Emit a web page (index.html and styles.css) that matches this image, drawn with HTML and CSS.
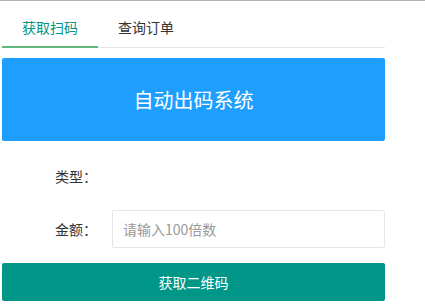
FILE: index.html
```html
<!DOCTYPE html>
<html lang="zh-CN">
<head>
    <meta charset="UTF-8">
    <meta name="viewport" content="width=device-width, initial-scale=1.0">
    <title>自动出码系统</title>
    <link rel="stylesheet" href="styles.css">
</head>
<body>
    <div class="page">
        <ul class="tab-title">
            <li class="tab-item active">获取扫码</li>
            <li class="tab-item">查询订单</li>
        </ul>
        <div class="banner">自动出码系统</div>
        <form class="code-form">
            <div class="form-item">
                <label class="form-label">类型：</label>
                <div class="input-block"></div>
            </div>
            <div class="form-item">
                <label class="form-label">金额：</label>
                <div class="input-block">
                    <input type="text" class="text-input" placeholder="请输入100倍数">
                </div>
            </div>
            <button type="button" class="submit-btn">获取二维码</button>
        </form>
    </div>
</body>
</html>
```

FILE: styles.css
```css
/* Base styles */
body {
    margin: 0;
    font-family: "Noto Sans CJK SC", "Liberation Sans", sans-serif;
    font-size: 14px;
    color: #333;
    background: #fff;
    border-top: 1px solid #b4b4b4;
}

.page {
    width: 383px;
    padding: 6px 0 0 2px;
}

/* Tabs */
.tab-title {
    display: flex;
    margin: 0;
    padding: 0;
    list-style: none;
    border-bottom: 1px solid #e6e6e6;
    height: 40px;
}

.tab-item {
    padding: 0 20px;
    line-height: 40px;
    height: 40px;
    color: #333;
    cursor: pointer;
}

.tab-item.active {
    color: #009688;
    border-bottom: 2px solid #5fb878;
    box-sizing: border-box;
    height: 41px;
}

/* Banner */
.banner {
    margin-top: 10px;
    height: 83px;
    background: #1e9fff;
    border-radius: 2px;
    color: #fff;
    font-size: 20px;
    display: flex;
    align-items: center;
    justify-content: center;
}

/* Form */
.code-form {
    margin-top: 16px;
}

.form-item {
    display: flex;
    margin-bottom: 15px;
    min-height: 38px;
}

.form-label {
    width: 80px;
    padding: 9px 15px;
    line-height: 20px;
    text-align: right;
    flex-shrink: 0;
}

.input-block {
    flex-grow: 1;
}

.text-input {
    width: 100%;
    height: 38px;
    box-sizing: border-box;
    border: 1px solid #e6e6e6;
    border-radius: 2px;
    padding-left: 10px;
    font-family: inherit;
    font-size: 14px;
    color: #333;
    outline: none;
}

.text-input::placeholder {
    color: #999;
}

.submit-btn {
    display: block;
    width: 100%;
    height: 38px;
    border: none;
    border-radius: 2px;
    background: #009688;
    color: #fff;
    font-family: inherit;
    font-size: 14px;
    cursor: pointer;
}
```
